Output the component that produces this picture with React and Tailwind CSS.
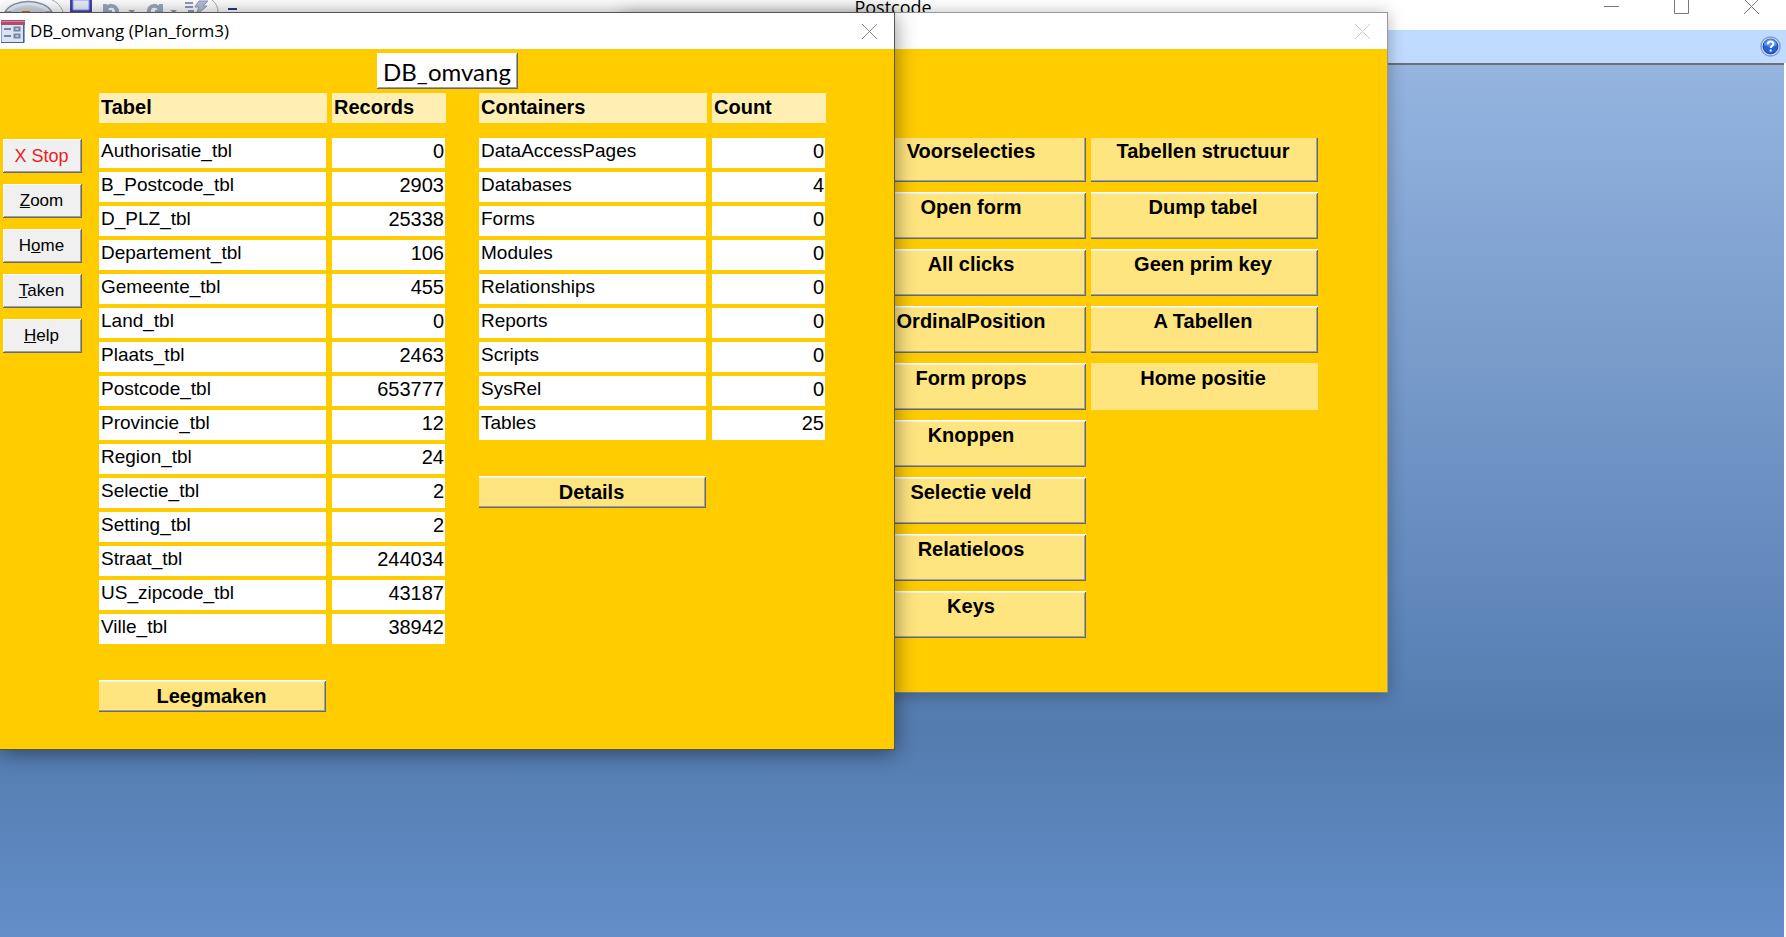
const tables = [
  ['Authorisatie_tbl', 0],
  ['B_Postcode_tbl', 2903],
  ['D_PLZ_tbl', 25338],
  ['Departement_tbl', 106],
  ['Gemeente_tbl', 455],
  ['Land_tbl', 0],
  ['Plaats_tbl', 2463],
  ['Postcode_tbl', 653777],
  ['Provincie_tbl', 12],
  ['Region_tbl', 24],
  ['Selectie_tbl', 2],
  ['Setting_tbl', 2],
  ['Straat_tbl', 244034],
  ['US_zipcode_tbl', 43187],
  ['Ville_tbl', 38942],
];

const containers = [
  ['DataAccessPages', 0],
  ['Databases', 4],
  ['Forms', 0],
  ['Modules', 0],
  ['Relationships', 0],
  ['Reports', 0],
  ['Scripts', 0],
  ['SysRel', 0],
  ['Tables', 25],
];

const menuLeft = ['Voorselecties', 'Open form', 'All clicks', 'OrdinalPosition', 'Form props', 'Knoppen', 'Selectie veld', 'Relatieloos', 'Keys'];
const menuRight = ['Tabellen structuur', 'Dump tabel', 'Geen prim key', 'A Tabellen'];

const bevel = 'shadow-[inset_0_1px_#ffffff,inset_-1px_-1px_#696969,inset_0_2px_#f0f0f0,inset_-2px_-2px_#a0a0a0]';
const bevelNoTop = 'shadow-[inset_-1px_-1px_#696969,inset_-2px_-2px_#a0a0a0]';
const bevelGray = 'shadow-[inset_-1px_-1px_#696969,inset_1px_1px_#ffffff,inset_-2px_-2px_#a0a0a0]';

function Cross({ className }) {
  return (
    <svg viewBox="0 0 15 15" className={className} fill="none" stroke="currentColor">
      <path d="M0 0L15 15M15 0L0 15" />
    </svg>
  );
}

function QuickAccess() {
  return (
    <svg width="240" height="12" viewBox="0 0 240 12" fill="none" className="block">
      <path d="M5 12C13 -2 44 -2 52 12Z" fill="#e9edf3" stroke="#8495ac" strokeWidth="1.5" />
      <path d="M11 12C19 3 38 3 46 12Z" fill="#d3dae5" />
      <path d="M22 11h8v1h-8z" fill="#d8741c" />
      <path d="M52 0C57 2 61 6 63 12" stroke="#a9abb0" />
      <path d="M70 0h22v12H70z" fill="#4044ac" />
      <path d="M73 0h16v10H73z" fill="#e9efff" stroke="#8b9be8" />
      <path d="M105 4v8h7M106 11C106 4 117 4 117 12" stroke="#9aa9c2" strokeWidth="4" />
      <path d="M128 10h7l-3 3z" fill="#8f98a8" />
      <path d="M149 12C148 4 159 4 160 11M161 4v8h-6" stroke="#9aa9c2" strokeWidth="4" />
      <path d="M170 10h7l-3 3z" fill="#8f98a8" />
      <path d="M185 3h8M185 7h8M188 11h6" stroke="#8e9cb8" strokeWidth="2" />
      <path d="M199 1h9l-5 5h4l-7 6h-3l2-5h-4z" fill="#b3c0d6" stroke="#8e9cb8" />
      <path d="M212 0C216 3 218 7 218 12" stroke="#a9abb0" />
      <path d="M228 8h9v2h-9z" fill="#1d4082" />
    </svg>
  );
}

function FormIcon() {
  return (
    <svg width="24" height="23" viewBox="0 0 24 23" fill="none">
      <path d="M.5.5h23v22H.5z" fill="#dbe4f4" stroke="#8aa0c4" />
      <path d="M0 0h24v5H0z" fill="#b8496e" />
      <path d="M0 1h24v1H0z" fill="#d4819c" />
      <path d="M23 5v18H0v-1h22V5z" fill="#47628f" />
      <path d="M3 9h7M3 16h7" stroke="#7385a3" strokeWidth="2" />
      <path d="M13.500 7.500h5v3h-5zM13.500 14.500h5v3h-5z" fill="#fff" stroke="#7385a3" strokeWidth="2" />
    </svg>
  );
}

function DataTable({ head, rows }) {
  return (
    <table className="block leading-[24px]">
      <thead className="block">
        <tr className="flex gap-[5px] text-left text-[20px] font-bold">
          <th className="h-[30px] w-[228px] bg-[#ffefb3] pt-[2px] pl-[2px]">{head[0]}</th>
          <th className="h-[30px] w-[114px] bg-[#ffefb3] pt-[2px] pl-[2px]">{head[1]}</th>
        </tr>
      </thead>
      <tbody className="mt-[15px] flex flex-col gap-1">
        {rows.map(([name, count]) => (
          <tr key={name} className="flex gap-[5px]">
            <td className="h-[30px] w-[228px] border-r border-[#ffcc00] bg-white pt-[1px] pl-[2px] text-[19px]">{name}</td>
            <td className="h-[30px] w-[113px] bg-white pt-[1px] pr-[1px] text-right text-[20px]">{count}</td>
          </tr>
        ))}
      </tbody>
    </table>
  );
}

function SideButton({ children, className = 'text-[17px] text-black' }) {
  return (
    <button type="button" className={`flex h-[34px] w-[79px] items-center justify-center bg-[#f0f0f0] pr-[2px] ${bevelGray} ${className}`}>
      <span>{children}</span>
    </button>
  );
}

function FormButton({ label }) {
  return (
    <button type="button" className={`mt-[36px] h-8 w-[227px] bg-[#ffe57f] pr-[2px] text-[20px] leading-[24px] font-bold ${bevel}`}>
      {label}
    </button>
  );
}

function MenuButton({ label, first, flat }) {
  return (
    <button
      type="button"
      className={`flex w-[227px] justify-center bg-[#ffe57f] pr-[3px] text-[20px] leading-[24px] font-bold ${first ? 'h-[44px] pt-[1px]' : 'h-[47px] pt-[3px]'} ${flat ? '' : first ? bevelNoTop : bevel}`}
    >
      {label}
    </button>
  );
}

export default function App() {
  return (
    <div className="relative flex min-h-screen flex-col overflow-hidden bg-white font-['Liberation_Sans',Arial,sans-serif] text-black">
      <header className="flex h-[30px] items-start">
        <div className="flex-1">
          <QuickAccess />
        </div>
        <h1 className="font-['Open_Sans',sans-serif] text-[18px] leading-[14px]">Postcode</h1>
        <div className="flex-1">
          <div className="flex justify-end gap-[55px] pr-[27px] text-[#777]">
            <button type="button" aria-label="Minimize">
              <svg width="15" height="15" className="block"><path d="M0 6.500h15" stroke="currentColor" /></svg>
            </button>
            <button type="button" aria-label="Maximize">
              <svg width="15" height="15" className="block"><path d="M.5 -1v14.500h14V-1" fill="none" stroke="currentColor" /></svg>
            </button>
            <button type="button" aria-label="Close">
              <svg width="15" height="15" className="block"><path d="M0 -1L15 14M15 -1L0 14" fill="none" stroke="currentColor" /></svg>
            </button>
          </div>
        </div>
      </header>

      <div className="flex h-[33px] items-center justify-end bg-[#bfdbff] pr-[5px]">
        <button type="button" aria-label="Help">
          <svg width="21" height="21" viewBox="0 0 21 21" className="block">
            <circle cx="10.500" cy="10.500" r="9.500" fill="#e4effc" stroke="#7fa3cf" strokeWidth="1.500" />
            <circle cx="10.500" cy="10.500" r="7.500" fill="#2460d8" stroke="#1a3f9c" />
            <path d="M4 9a6.500 6 0 0 1 13 0c-4 2-9 2-13 0z" fill="#5d92ee" />
            <path d="M7.800 8.200c0-3.600 5.600-3.600 5.600-.3 0 2-2.700 2-2.700 4.200M10.700 13.600v2" fill="none" stroke="#fff" strokeWidth="2" />
          </svg>
        </button>
      </div>

      <main className="mr-[2px] flex-1 border-t-2 border-[#6f6f6f] bg-[linear-gradient(to_bottom,#95b4e0_0%,#6a8fc0_50%,#658abd_57%,#5c84b8_66%,#547cae_76%,#5982b8_85%,#638ec8_100%)]" />

      {/* form behind */}
      <section className="absolute top-[12px] left-[622px] w-[766px] border border-[#999] border-b-[#75808c] bg-[#ffcc00] shadow-[0_2px_16px_rgba(0,0,0,0.3)]">
        <div className="flex h-[36px] items-center justify-end bg-white pr-[17px] text-[#ccc]">
          <button type="button" aria-label="Close menu">
            <Cross className="block size-[15px]" />
          </button>
        </div>
        <div className="flex justify-end gap-[5px] pt-[89px] pr-[69px] pb-[54px]">
          <div className="flex flex-col gap-[10px]">
            {menuLeft.map((label, i) => (
              <MenuButton key={label} label={label} first={i === 0} />
            ))}
          </div>
          <div className="flex flex-col gap-[10px]">
            {menuRight.map((label, i) => (
              <MenuButton key={label} label={label} first={i === 0} />
            ))}
            <MenuButton label="Home positie" flat />
          </div>
        </div>
      </section>

      {/* active form */}
      <section className="absolute top-[12px] left-0 w-[895px] border-y border-r border-[#555] bg-[#ffcc00] shadow-[0_3px_20px_rgba(0,0,0,0.45)]">
        <div className="flex h-[36px] items-center gap-[5px] bg-white pr-[17px] pl-[1px]">
          <FormIcon />
          <h2 className="flex-1 font-['Open_Sans',sans-serif] text-[17px]">DB_omvang (Plan_form3)</h2>
          <button type="button" aria-label="Close form" className="text-[#888]">
            <Cross className="block size-[15px]" />
          </button>
        </div>
        <div className="flex flex-col pt-[4px] pb-[37px]">
          <div className={`flex h-[36px] w-[141px] items-center justify-center self-center bg-white pt-[2px] font-['Comic_Sans_MS','Lato',sans-serif] text-[24px] ${bevelGray}`}>
            DB_omvang
          </div>
          <div className="mt-[4px] flex items-start pl-[3px]">
            <nav className="mr-[17px] flex flex-col gap-[11px] pt-[46px]">
              <SideButton className="text-[18px] text-[#ed1c24]">X Stop</SideButton>
              <SideButton><u>Z</u>oom</SideButton>
              <SideButton>H<u>o</u>me</SideButton>
              <SideButton><u>T</u>aken</SideButton>
              <SideButton><u>H</u>elp</SideButton>
            </nav>
            <div className="mr-[33px]">
              <DataTable head={['Tabel', 'Records']} rows={tables} />
              <FormButton label="Leegmaken" />
            </div>
            <div>
              <DataTable head={['Containers', 'Count']} rows={containers} />
              <FormButton label="Details" />
            </div>
          </div>
        </div>
      </section>
    </div>
  );
}
